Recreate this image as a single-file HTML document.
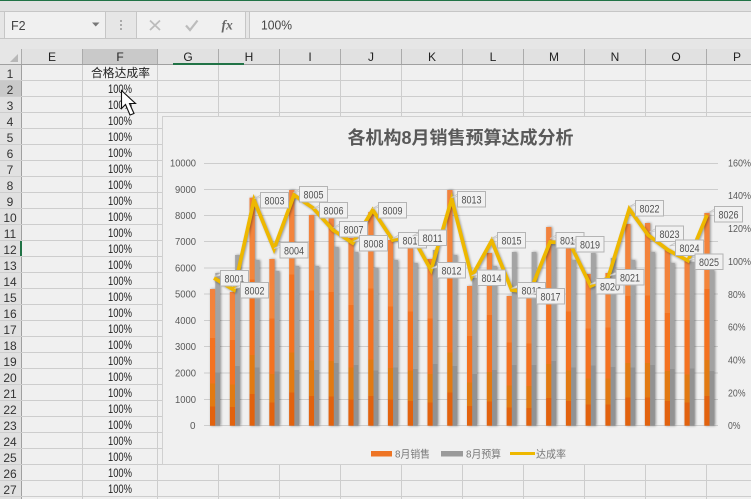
<!DOCTYPE html>
<html><head><meta charset="utf-8">
<style>
html,body{margin:0;padding:0;background:#f0f0f0;overflow:hidden}
svg{display:block}
text{font-family:"Liberation Sans","Noto Sans CJK SC",sans-serif}
.c{font-size:12px;fill:#222;text-anchor:middle}
.r{font-size:12px;fill:#333;text-anchor:middle}
.p{font-size:11.5px;fill:#222}
.a{font-size:10.5px;fill:#595959}
.l{font-size:11px;fill:#505050}
.g{font-size:10.5px;fill:#777}
.gl{stroke:#cdcdcd;stroke-width:1}
.o rect{fill:url(#og)}
.y rect{fill:url(#gg)}
</style></head>
<body>
<svg xmlns="http://www.w3.org/2000/svg" width="751" height="499" viewBox="0 0 751 499">
<defs>
<linearGradient id="og" x1="0" y1="0" x2="0" y2="1">
<stop offset="0" stop-color="#f2823d"/><stop offset=".358" stop-color="#f4853a"/><stop offset=".358" stop-color="#f47220"/><stop offset=".69" stop-color="#f47220"/><stop offset=".69" stop-color="#e27a12"/><stop offset=".86" stop-color="#e27a12"/><stop offset=".86" stop-color="#e2620e"/><stop offset="1" stop-color="#e2620e"/>
</linearGradient>
<linearGradient id="gg" x1="0" y1="0" x2="0" y2="1">
<stop offset="0" stop-color="#a4a4a4"/><stop offset=".65" stop-color="#a2a2a2"/><stop offset=".65" stop-color="#929292"/><stop offset="1" stop-color="#929292"/>
</linearGradient>
<g id="b"><path d="M0 5L-6 6L5 0" fill="#f0f0f0" stroke="#c4c4c4" stroke-width=".8"/><rect x="0" y="0" width="28" height="15.5" fill="#f1f1f1" stroke="#b4b4b4" stroke-width="1"/></g>
</defs>
<!-- top chrome -->
<rect width="751" height="499" fill="#f0f0f0"/>
<rect width="751" height="39" fill="#e6e6e6"/>
<rect width="751" height="1" fill="#217346"/>
<rect y="1" width="751" height="10" fill="#e2e2e2"/>
<rect y="11" width="751" height="1" fill="#c6c6c6"/>
<rect x="249" y="12" width="502" height="26" fill="#f0f0f0"/>
<rect y="38" width="751" height="1" fill="#c6c6c6"/>
<rect x="4.5" y="11.5" width="101" height="27" fill="#f0f0f0" stroke="#c6c6c6"/>
<rect x="136.5" y="11.5" width="109" height="27" fill="#f0f0f0" stroke="#c6c6c6"/>
<rect x="249.5" y="11.5" width="503" height="27" fill="#f0f0f0" stroke="#c6c6c6"/>
<text x="11" y="30" style="font-size:12.5px;fill:#444">F2</text>
<path d="M92 22.5h7.5l-3.75 4z" fill="#777"/>
<rect x="120" y="20" width="2" height="2" fill="#aaa"/><rect x="120" y="24" width="2" height="2" fill="#aaa"/><rect x="120" y="28" width="2" height="2" fill="#aaa"/>
<path d="M150 20.5L160 30M160 20.5L150 30" stroke="#bcbcbc" stroke-width="1.8" fill="none"/>
<path d="M186 25.5L190 30L197.5 20.5" stroke="#bcbcbc" stroke-width="2.2" fill="none"/>
<text x="221.5" y="29.5" style="font-family:'Liberation Serif',serif;font-style:italic;font-weight:bold;font-size:13.5px;fill:#666">fx</text>
<text x="261" y="29.5" style="font-size:13px;fill:#444" textLength="31" lengthAdjust="spacingAndGlyphs">100%</text>
<!-- column header -->
<rect y="39" width="751" height="10" fill="#e6e6e6"/>
<rect y="49" width="751" height="15" fill="#e1e1e1"/>
<rect x="83" y="49" width="75" height="15" fill="#c9c9c9"/>
<rect x="0" y="39" width="21" height="25" fill="#e6e6e6"/>
<path d="M18 54v8h-8z" fill="#b8b8b8"/>
<rect y="64" width="751" height="1" fill="#a0a0a0"/>
<path d="M21.5 49V64M82.5 49V64M157.5 49V64M218.5 49V64M279.5 49V64M340.5 49V64M401.5 49V64M462.5 49V64M523.5 49V64M584.5 49V64M645.5 49V64M706.5 49V64" stroke="#ababab" fill="none"/>
<rect x="173" y="63" width="71" height="2" fill="#217346"/>
<g class="c">
<text class="c" x="52" y="61">E</text><text class="c" x="120" y="61">F</text><text class="c" x="188" y="61">G</text><text class="c" x="249" y="61">H</text><text class="c" x="310" y="61">I</text><text class="c" x="371" y="61">J</text><text class="c" x="432" y="61">K</text><text class="c" x="493" y="61">L</text><text class="c" x="554" y="61">M</text><text class="c" x="615" y="61">N</text><text class="c" x="676" y="61">O</text><text class="c" x="737" y="61">P</text>
</g>
<!-- row header -->
<rect y="65" width="21" height="434" fill="#e1e1e1"/>
<rect y="81" width="21" height="15" fill="#c9c9c9"/>
<rect x="21" y="64" width="1" height="435" fill="#a0a0a0"/>
<rect x="20" y="241" width="2" height="15" fill="#217346"/>
<!-- grid -->
<path class="gl" fill="none" d="M0 80.5H751M0 96.5H751M0 112.5H751M0 128.5H163M0 144.5H163M0 160.5H163M0 176.5H163M0 192.5H163M0 208.5H163M0 224.5H163M0 240.5H163M0 256.5H163M0 272.5H163M0 288.5H163M0 304.5H163M0 320.5H163M0 336.5H163M0 352.5H163M0 368.5H163M0 384.5H163M0 400.5H163M0 416.5H163M0 432.5H163M0 448.5H163M0 464.5H751M0 480.5H751M0 496.5H751"/>
<path class="gl" fill="none" d="M82.5 65V499M157.5 65V499M218.5 65V116M279.5 65V116M340.5 65V116M401.5 65V116M462.5 65V116M523.5 65V116M584.5 65V116M645.5 65V116M706.5 65V116M218.5 465V499M279.5 465V499M340.5 465V499M401.5 465V499M462.5 465V499M523.5 465V499M584.5 465V499M645.5 465V499M706.5 465V499"/>
<!-- row numbers -->
<text class="r" x="10" y="78">1</text><text class="r" x="10" y="94">2</text><text class="r" x="10" y="110">3</text><text class="r" x="10" y="126">4</text><text class="r" x="10" y="142">5</text><text class="r" x="10" y="158">6</text><text class="r" x="10" y="174">7</text><text class="r" x="10" y="190">8</text><text class="r" x="10" y="206">9</text><text class="r" x="10" y="222">10</text><text class="r" x="10" y="238">11</text><text class="r" x="10" y="254">12</text><text class="r" x="10" y="270">13</text><text class="r" x="10" y="286">14</text><text class="r" x="10" y="302">15</text><text class="r" x="10" y="318">16</text><text class="r" x="10" y="334">17</text><text class="r" x="10" y="350">18</text><text class="r" x="10" y="366">19</text><text class="r" x="10" y="382">20</text><text class="r" x="10" y="398">21</text><text class="r" x="10" y="414">22</text><text class="r" x="10" y="430">23</text><text class="r" x="10" y="446">24</text><text class="r" x="10" y="462">25</text><text class="r" x="10" y="478">26</text><text class="r" x="10" y="494">27</text>
<!-- column F -->
<text x="91" y="77" style="font-size:11.8px;fill:#222">合格达成率</text>
<text class="p" x="108" y="93" textLength="24" lengthAdjust="spacingAndGlyphs">100%</text>
<text class="p" x="108" y="109" textLength="24" lengthAdjust="spacingAndGlyphs">100%</text>
<text class="p" x="108" y="125" textLength="24" lengthAdjust="spacingAndGlyphs">100%</text>
<text class="p" x="108" y="141" textLength="24" lengthAdjust="spacingAndGlyphs">100%</text>
<text class="p" x="108" y="157" textLength="24" lengthAdjust="spacingAndGlyphs">100%</text>
<text class="p" x="108" y="173" textLength="24" lengthAdjust="spacingAndGlyphs">100%</text>
<text class="p" x="108" y="189" textLength="24" lengthAdjust="spacingAndGlyphs">100%</text>
<text class="p" x="108" y="205" textLength="24" lengthAdjust="spacingAndGlyphs">100%</text>
<text class="p" x="108" y="221" textLength="24" lengthAdjust="spacingAndGlyphs">100%</text>
<text class="p" x="108" y="237" textLength="24" lengthAdjust="spacingAndGlyphs">100%</text>
<text class="p" x="108" y="253" textLength="24" lengthAdjust="spacingAndGlyphs">100%</text>
<text class="p" x="108" y="269" textLength="24" lengthAdjust="spacingAndGlyphs">100%</text>
<text class="p" x="108" y="285" textLength="24" lengthAdjust="spacingAndGlyphs">100%</text>
<text class="p" x="108" y="301" textLength="24" lengthAdjust="spacingAndGlyphs">100%</text>
<text class="p" x="108" y="317" textLength="24" lengthAdjust="spacingAndGlyphs">100%</text>
<text class="p" x="108" y="333" textLength="24" lengthAdjust="spacingAndGlyphs">100%</text>
<text class="p" x="108" y="349" textLength="24" lengthAdjust="spacingAndGlyphs">100%</text>
<text class="p" x="108" y="365" textLength="24" lengthAdjust="spacingAndGlyphs">100%</text>
<text class="p" x="108" y="381" textLength="24" lengthAdjust="spacingAndGlyphs">100%</text>
<text class="p" x="108" y="397" textLength="24" lengthAdjust="spacingAndGlyphs">100%</text>
<text class="p" x="108" y="413" textLength="24" lengthAdjust="spacingAndGlyphs">100%</text>
<text class="p" x="108" y="429" textLength="24" lengthAdjust="spacingAndGlyphs">100%</text>
<text class="p" x="108" y="445" textLength="24" lengthAdjust="spacingAndGlyphs">100%</text>
<text class="p" x="108" y="461" textLength="24" lengthAdjust="spacingAndGlyphs">100%</text>
<text class="p" x="108" y="477" textLength="24" lengthAdjust="spacingAndGlyphs">100%</text>
<text class="p" x="108" y="493" textLength="24" lengthAdjust="spacingAndGlyphs">100%</text>
<!-- chart -->
<rect x="162.5" y="116.5" width="600" height="348" fill="#f0f0f0" stroke="#d0d0d0"/>
<text x="347.5" y="144" style="font-size:18px;font-weight:bold;fill:#595959" textLength="226" lengthAdjust="spacingAndGlyphs">各机构8月销售预算达成分析</text>
<path class="gl" fill="none" d="M204 163.5H718M204 189.5H718M204 215.5H718M204 241.5H718M204 268H718M204 294H718M204 320.5H718M204 346.5H718M204 373H718M204 399.5H718M204 425.5H718"/>
<g class="a">
<text class="a" x="170" y="166.5" textLength="26" lengthAdjust="spacingAndGlyphs">10000</text>
<text class="a" x="175" y="193" textLength="21" lengthAdjust="spacingAndGlyphs">9000</text>
<text class="a" x="175" y="219" textLength="21" lengthAdjust="spacingAndGlyphs">8000</text>
<text class="a" x="175" y="245" textLength="21" lengthAdjust="spacingAndGlyphs">7000</text>
<text class="a" x="175" y="271.5" textLength="21" lengthAdjust="spacingAndGlyphs">6000</text>
<text class="a" x="175" y="297.5" textLength="21" lengthAdjust="spacingAndGlyphs">5000</text>
<text class="a" x="175" y="324" textLength="21" lengthAdjust="spacingAndGlyphs">4000</text>
<text class="a" x="175" y="350" textLength="21" lengthAdjust="spacingAndGlyphs">3000</text>
<text class="a" x="175" y="376.5" textLength="21" lengthAdjust="spacingAndGlyphs">2000</text>
<text class="a" x="175" y="403" textLength="21" lengthAdjust="spacingAndGlyphs">1000</text>
<text class="a" x="190" y="429" textLength="5.5" lengthAdjust="spacingAndGlyphs">0</text>
<text class="a" x="728" y="166.5" textLength="23" lengthAdjust="spacingAndGlyphs">160%</text>
<text class="a" x="728" y="199" textLength="23" lengthAdjust="spacingAndGlyphs">140%</text>
<text class="a" x="728" y="232" textLength="23" lengthAdjust="spacingAndGlyphs">120%</text>
<text class="a" x="728" y="265" textLength="23" lengthAdjust="spacingAndGlyphs">100%</text>
<text class="a" x="728" y="298" textLength="17.5" lengthAdjust="spacingAndGlyphs">80%</text>
<text class="a" x="728" y="330.5" textLength="17.5" lengthAdjust="spacingAndGlyphs">60%</text>
<text class="a" x="728" y="363.5" textLength="17.5" lengthAdjust="spacingAndGlyphs">40%</text>
<text class="a" x="728" y="396.5" textLength="17.5" lengthAdjust="spacingAndGlyphs">20%</text>
<text class="a" x="728" y="429" textLength="12.5" lengthAdjust="spacingAndGlyphs">0%</text>
</g>
<!-- bars -->
<g style="filter:drop-shadow(1.5px 0 1.3px rgba(0,0,0,.4))">
<g class="o">
<rect x="210" y="289" width="5.3" height="136.7"/><rect x="229.8" y="292" width="5.3" height="133.7"/><rect x="249.5" y="197.7" width="5.3" height="228"/><rect x="269.3" y="259" width="5.3" height="166.7"/><rect x="289.1" y="190" width="5.3" height="235.7"/><rect x="308.9" y="215" width="5.3" height="210.7"/><rect x="328.6" y="217.7" width="5.3" height="208"/><rect x="348.4" y="238" width="5.3" height="187.7"/><rect x="368.2" y="212" width="5.3" height="213.7"/><rect x="387.9" y="240" width="5.3" height="185.7"/><rect x="407.7" y="248" width="5.3" height="177.7"/><rect x="427.5" y="259" width="5.3" height="166.7"/><rect x="447.2" y="190" width="5.3" height="235.7"/><rect x="467" y="286" width="5.3" height="139.7"/><rect x="486.8" y="253" width="5.3" height="172.7"/><rect x="506.6" y="296" width="5.3" height="129.7"/><rect x="526.3" y="298" width="5.3" height="127.7"/><rect x="546.1" y="227" width="5.3" height="198.7"/><rect x="565.9" y="248" width="5.3" height="177.7"/><rect x="585.6" y="274" width="5.3" height="151.7"/><rect x="605.4" y="273" width="5.3" height="152.7"/><rect x="625.2" y="224" width="5.3" height="201.7"/><rect x="644.9" y="223" width="5.3" height="202.7"/><rect x="664.7" y="250" width="5.3" height="175.7"/><rect x="684.5" y="261" width="5.3" height="164.7"/><rect x="704.3" y="213" width="5.3" height="212.7"/>
</g>
<g class="y">
<rect x="215.3" y="273" width="4.7" height="152.7"/><rect x="235.1" y="255" width="4.7" height="170.7"/><rect x="254.8" y="260" width="4.7" height="165.7"/><rect x="274.6" y="271" width="4.7" height="154.7"/><rect x="294.4" y="266" width="4.7" height="159.7"/><rect x="314.2" y="266" width="4.7" height="159.7"/><rect x="333.9" y="247" width="4.7" height="178.7"/><rect x="353.7" y="252" width="4.7" height="173.7"/><rect x="373.5" y="268" width="4.7" height="157.7"/><rect x="393.2" y="260" width="4.7" height="165.7"/><rect x="413" y="263" width="4.7" height="162.7"/><rect x="432.8" y="250" width="4.7" height="175.7"/><rect x="452.5" y="255" width="4.7" height="170.7"/><rect x="472.3" y="278" width="4.7" height="147.7"/><rect x="492.1" y="266" width="4.7" height="159.7"/><rect x="511.9" y="252" width="4.7" height="173.7"/><rect x="531.6" y="252" width="4.7" height="173.7"/><rect x="551.4" y="241" width="4.7" height="184.7"/><rect x="571.2" y="260" width="4.7" height="165.7"/><rect x="590.9" y="253" width="4.7" height="172.7"/><rect x="610.7" y="258" width="4.7" height="167.7"/><rect x="630.5" y="260" width="4.7" height="165.7"/><rect x="650.2" y="252" width="4.7" height="173.7"/><rect x="670" y="263" width="4.7" height="162.7"/><rect x="689.8" y="262" width="4.7" height="163.7"/><rect x="709.6" y="270" width="4.7" height="155.7"/>
</g>
</g>
<!-- rate line -->
<polyline fill="none" stroke="#eeb800" stroke-width="3.7" stroke-linejoin="miter" style="filter:drop-shadow(1px 1px 1px rgba(0,0,0,.35))" points="214,278 234,290 254,200 274,249 294,195 313,208 333,230 352.7,243 372.7,210 392.7,240 412,236 431,270 451.7,199 471.7,276.7 491.7,240.7 511.7,290 530,292 550,242 569.7,243 590.7,286 608,278 629.3,209 648,235 668,250 688,260.7 707,215"/>
<!-- data labels -->
<use href="#b" x="220.5" y="270.5"/><text class="l" x="224.5" y="282.5" textLength="20" lengthAdjust="spacingAndGlyphs">8001</text>
<use href="#b" x="240.5" y="282.5"/><text class="l" x="244.5" y="294.5" textLength="20" lengthAdjust="spacingAndGlyphs">8002</text>
<use href="#b" x="260.5" y="192.5"/><text class="l" x="264.5" y="204.5" textLength="20" lengthAdjust="spacingAndGlyphs">8003</text>
<use href="#b" x="280" y="242.5"/><text class="l" x="284" y="254.5" textLength="20" lengthAdjust="spacingAndGlyphs">8004</text>
<use href="#b" x="299.5" y="186.5"/><text class="l" x="303.5" y="198.5" textLength="20" lengthAdjust="spacingAndGlyphs">8005</text>
<use href="#b" x="319.5" y="202.5"/><text class="l" x="323.5" y="214.5" textLength="20" lengthAdjust="spacingAndGlyphs">8006</text>
<use href="#b" x="339.5" y="221.5"/><text class="l" x="343.5" y="233.5" textLength="20" lengthAdjust="spacingAndGlyphs">8007</text>
<use href="#b" x="359.5" y="235.5"/><text class="l" x="363.5" y="247.5" textLength="20" lengthAdjust="spacingAndGlyphs">8008</text>
<use href="#b" x="378.5" y="202.5"/><text class="l" x="382.5" y="214.5" textLength="20" lengthAdjust="spacingAndGlyphs">8009</text>
<use href="#b" x="398.5" y="232.5"/><text class="l" x="402.5" y="244.5" textLength="20" lengthAdjust="spacingAndGlyphs">8010</text>
<use href="#b" x="418.5" y="230"/><text class="l" x="422.5" y="242" textLength="20" lengthAdjust="spacingAndGlyphs">8011</text>
<use href="#b" x="437.5" y="262.5"/><text class="l" x="441.5" y="274.5" textLength="20" lengthAdjust="spacingAndGlyphs">8012</text>
<use href="#b" x="457.5" y="191.5"/><text class="l" x="461.5" y="203.5" textLength="20" lengthAdjust="spacingAndGlyphs">8013</text>
<use href="#b" x="477.5" y="270"/><text class="l" x="481.5" y="282" textLength="20" lengthAdjust="spacingAndGlyphs">8014</text>
<use href="#b" x="497.5" y="232.5"/><text class="l" x="501.5" y="244.5" textLength="20" lengthAdjust="spacingAndGlyphs">8015</text>
<use href="#b" x="517.5" y="282.5"/><text class="l" x="521.5" y="294.5" textLength="20" lengthAdjust="spacingAndGlyphs">8016</text>
<use href="#b" x="536.5" y="288.5"/><text class="l" x="540.5" y="300.5" textLength="20" lengthAdjust="spacingAndGlyphs">8017</text>
<use href="#b" x="556" y="232.5"/><text class="l" x="560" y="244.5" textLength="20" lengthAdjust="spacingAndGlyphs">8018</text>
<use href="#b" x="576" y="236.5"/><text class="l" x="580" y="248.5" textLength="20" lengthAdjust="spacingAndGlyphs">8019</text>
<use href="#b" x="596" y="278.5"/><text class="l" x="600" y="290.5" textLength="20" lengthAdjust="spacingAndGlyphs">8020</text>
<use href="#b" x="616" y="269.5"/><text class="l" x="620" y="281.5" textLength="20" lengthAdjust="spacingAndGlyphs">8021</text>
<use href="#b" x="635.5" y="200.5"/><text class="l" x="639.5" y="212.5" textLength="20" lengthAdjust="spacingAndGlyphs">8022</text>
<use href="#b" x="655.5" y="226"/><text class="l" x="659.5" y="238" textLength="20" lengthAdjust="spacingAndGlyphs">8023</text>
<use href="#b" x="675.5" y="240"/><text class="l" x="679.5" y="252" textLength="20" lengthAdjust="spacingAndGlyphs">8024</text>
<use href="#b" x="695" y="254"/><text class="l" x="699" y="266" textLength="20" lengthAdjust="spacingAndGlyphs">8025</text>
<use href="#b" x="714.5" y="206.5"/><text class="l" x="718.5" y="218.5" textLength="20" lengthAdjust="spacingAndGlyphs">8026</text>
<!-- legend -->
<rect x="371" y="451" width="21" height="5.5" fill="#ee7424"/>
<text class="g" x="395" y="457.5" textLength="35" lengthAdjust="spacingAndGlyphs">8月销售</text>
<rect x="441" y="451" width="22" height="5.5" fill="#9a9a9a"/>
<text class="g" x="466" y="457.5" textLength="35" lengthAdjust="spacingAndGlyphs">8月预算</text>
<rect x="510" y="452" width="25" height="3" fill="#eeb800"/>
<text class="g" x="536" y="457.5" textLength="30" lengthAdjust="spacingAndGlyphs">达成率</text>
<!-- cursor -->
<path d="M121.5 90.5V108.5L125.5 104.5L130 115L134 113.5L129.5 103.5H135.5Z" fill="#fff" stroke="#111" stroke-width="1.1" stroke-linejoin="miter"/>
</svg>
</body></html>
